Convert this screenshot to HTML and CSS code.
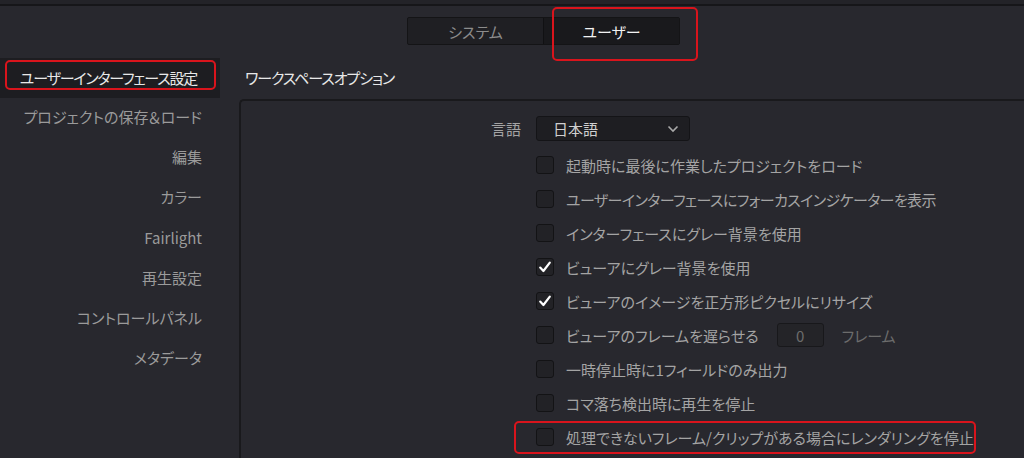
FILE: index.html
```html
<!DOCTYPE html>
<html lang="ja">
<head>
    <meta charset="UTF-8">
    <meta name="viewport" content="width=device-width, initial-scale=1.0">
    <title>環境設定 - ユーザー</title>
    <link rel="stylesheet" href="styles.css">
</head>
<body>
    <div class="topbar"></div>

    <div class="tabs-row">
        <div class="segment">
            <div class="seg-tab">システム</div>
            <div class="seg-tab active">ユーザー</div>
            <div class="mark mark-tab"></div>
        </div>
    </div>

    <div class="main">
        <!-- Sidebar -->
        <nav class="sidebar">
            <div class="nav-item selected">
                ユーザーインターフェース設定
                <div class="mark mark-nav"></div>
            </div>
            <div class="nav-item">プロジェクトの保存＆ロード</div>
            <div class="nav-item">編集</div>
            <div class="nav-item">カラー</div>
            <div class="nav-item">Fairlight</div>
            <div class="nav-item">再生設定</div>
            <div class="nav-item">コントロールパネル</div>
            <div class="nav-item">メタデータ</div>
        </nav>

        <!-- Content -->
        <section class="content">
            <h2 class="section-title">ワークスペースオプション</h2>
            <div class="panel">
                <div class="form-row lang-row">
                    <div class="form-label">言語</div>
                    <div class="select">
                        <span>日本語</span>
                        <svg class="chevron" width="12" height="8" viewBox="0 0 12 8">
                            <polyline points="1.5,1.5 6,6 10.5,1.5" fill="none" stroke="#a9a9a9" stroke-width="1.6"/>
                        </svg>
                    </div>
                </div>

                <div class="options">
                    <label class="option"><span class="box"></span>起動時に最後に作業したプロジェクトをロード</label>
                    <label class="option kana"><span class="box"></span>ユーザーインターフェースにフォーカスインジケーターを表示</label>
                    <label class="option"><span class="box"></span>インターフェースにグレー背景を使用</label>
                    <label class="option"><span class="box checked"><svg width="14" height="14" viewBox="0 0 14 14"><path d="M2.2 7.6 L5.4 11 L11.8 2.6" fill="none" stroke="#fff" stroke-width="2.2" stroke-linecap="round" stroke-linejoin="round"/></svg></span>ビューアにグレー背景を使用</label>
                    <label class="option"><span class="box checked"><svg width="14" height="14" viewBox="0 0 14 14"><path d="M2.2 7.6 L5.4 11 L11.8 2.6" fill="none" stroke="#fff" stroke-width="2.2" stroke-linecap="round" stroke-linejoin="round"/></svg></span>ビューアのイメージを正方形ピクセルにリサイズ</label>
                    <label class="option"><span class="box"></span>ビューアのフレームを遅らせる<span class="num-input">0</span><span class="unit">フレーム</span></label>
                    <label class="option"><span class="box"></span>一時停止時に1フィールドのみ出力</label>
                    <label class="option"><span class="box"></span>コマ落ち検出時に再生を停止</label>
                    <label class="option"><span class="box"></span>処理できないフレーム/クリップがある場合にレンダリングを停止<div class="mark mark-row"></div></label>
                </div>
            </div>
        </section>
    </div>
</body>
</html>
```

FILE: styles.css
```css
:root {
    --bg: #28282e;
    --bg-top: #232328;
    --line-dark: #161619;
    --field: #1e1e22;
    --field-border: #141417;
    --text-bright: #e8e8e8;
    --text: #a4a4a4;
    --text-dim: #6c6c6c;
    --mark-red: #d9141c;
}

* {
    box-sizing: border-box;
    margin: 0;
    padding: 0;
}

body {
    width: 1024px;
    height: 458px;
    overflow: hidden;
    background: var(--bg);
    color: var(--text);
    font-family: "Noto Sans CJK JP", "Noto Sans", sans-serif;
    font-size: 15px;
    font-feature-settings: "palt";
    line-height: 1;
}

.topbar {
    height: 6px;
    background: var(--bg-top);
    border-bottom: 2px solid var(--line-dark);
}

/* Tabs */
.tabs-row {
    height: 52px;
    padding: 11px 0 0 407px;
}

.segment {
    position: relative;
    display: flex;
    width: 273px;
    height: 28px;
    border: 1px solid #141416;
    border-radius: 2px;
    background: #1f1f23;
}

.seg-tab {
    flex: 1;
    display: flex;
    align-items: center;
    justify-content: center;
    color: #8c8c8c;
    font-size: 15px;
}

.seg-tab.active {
    background: #19191c;
    border-left: 1px solid #111113;
    color: #f2f2f2;
}

/* Red annotation boxes */
.mark {
    position: absolute;
    border: 2px solid var(--mark-red);
    border-radius: 5px;
    pointer-events: none;
}

.mark-tab {
    left: 144px;
    top: -11px;
    width: 146px;
    height: 54px;
}

.mark-nav {
    left: 5px;
    top: 2px;
    width: 211px;
    height: 30px;
}

.mark-row {
    left: -22px;
    top: 1px;
    width: 462px;
    height: 33px;
}

/* Layout */
.main {
    display: flex;
    height: 400px;
}

.sidebar {
    width: 220px;
    flex-shrink: 0;
}

.nav-item {
    position: relative;
    height: 40.3px;
    display: flex;
    align-items: center;
    justify-content: flex-end;
    padding: 0 18px 4px 0;
    color: #9b9b9b;
}

.nav-item.selected {
    height: 40px;
    padding: 0 3px 1px 0;
    justify-content: center;
    background: #1d1d21;
    color: var(--text-bright);
    letter-spacing: -1.2px;
}

.content {
    flex: 1;
    min-width: 0;
    padding-left: 19px;
}

.section-title {
    height: 41px;
    display: flex;
    align-items: center;
    padding: 0 0 2px 6px;
    font-size: 15px;
    font-weight: normal;
    color: var(--text-bright);
    letter-spacing: -1.1px;
}

.panel {
    height: 359px;
    border: 2px solid #19191c;
    border-right: none;
    border-bottom: none;
    border-radius: 5px 0 0 0;
    padding-top: 15px;
}

.form-row {
    display: flex;
    align-items: center;
}

.form-label {
    width: 280px;
    text-align: right;
}

.select {
    margin-left: 15px;
    width: 154px;
    height: 25px;
    display: flex;
    align-items: center;
    justify-content: space-between;
    padding: 0 10px 0 16px;
    background: var(--field);
    border: 1px solid var(--field-border);
    border-radius: 3px;
    color: #cfcfcf;
}

.options {
    padding: 7px 0 0 295px;
}

.option {
    position: relative;
    height: 34px;
    display: flex;
    align-items: center;
    color: var(--text);
}

.option.kana {
    letter-spacing: -0.6px;
}

.box {
    width: 18px;
    height: 18px;
    margin-right: 12px;
    flex-shrink: 0;
    display: flex;
    align-items: center;
    justify-content: center;
    background: #222226;
    border: 1px solid #131315;
    border-radius: 3px;
}

.num-input {
    width: 47px;
    height: 24px;
    margin-left: 18px;
    display: flex;
    align-items: center;
    justify-content: center;
    background: #242428;
    border: 1px solid #18181b;
    border-radius: 3px;
    color: var(--text-dim);
}

.unit {
    margin-left: 18px;
    color: var(--text-dim);
}
```
